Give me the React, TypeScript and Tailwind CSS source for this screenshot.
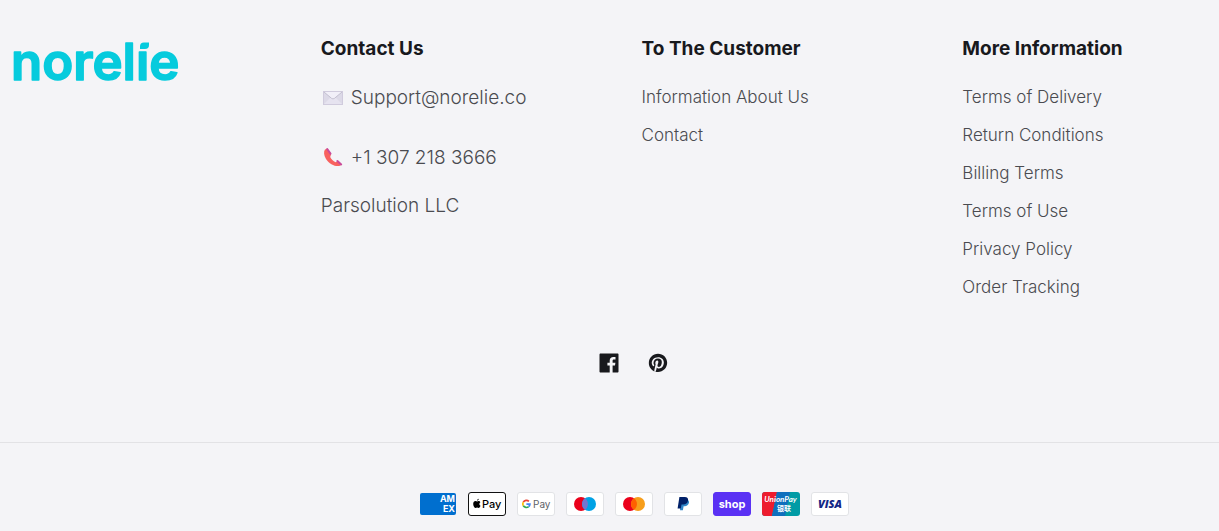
import type { ReactNode } from "react";

const customerLinks = ["Information About Us", "Contact"];

const informationLinks = [
  "Terms of Delivery",
  "Return Conditions",
  "Billing Terms",
  "Terms of Use",
  "Privacy Policy",
  "Order Tracking",
];

function Logo() {
  return (
    <svg width="192" height="64" viewBox="0 0 192 64" role="img" aria-label="norelie">
      <text
        x="11"
        y="49"
        fontFamily="Inter, sans-serif"
        fontSize="51"
        fontWeight="600"
        fill="#06cbdd"
        stroke="#06cbdd"
        strokeWidth="1.500"
        strokeLinejoin="round"
      >
        norelıe
      </text>
      {/* Leaf that stands in for the dot of the i */}
      <path d="M140 18v-2.500q0-4 4-4h5v2.500q0 4-4 4z" fill="#06cbdd" />
    </svg>
  );
}

function EnvelopeIcon() {
  return (
    <svg className="shrink-0" width="24" height="24" viewBox="0 0 24 24" aria-hidden="true">
      <rect x="2.5" y="5.5" width="19" height="13" fill="#dcd9e7" stroke="#d0cbdd" />
      <path d="M3 18 9.5 11.5h5L21 18z" fill="#e6e3f0" />
      <path d="M3 6h18l-7.6 6.4q-1.4 1-2.8 0z" fill="#f1eff8" />
      <path d="m3 6 7.6 6.4q1.4 1 2.8 0L21 6" fill="none" stroke="#b9b5c6" strokeWidth=".8" />
    </svg>
  );
}

function PhoneIcon() {
  return (
    <svg className="shrink-0" width="24" height="24" viewBox="0 0 24 24" aria-hidden="true">
      <path
        d="M4 3.500C2.500 5.500 2.800 9.500 5 12.900c2.800 4.300 8 7.300 12 7.200 1.800 0 3.100-.6 3.800-1.500l-4-3.600-2.300 1.300c-2-.8-4.600-3.100-5.300-5.200l.9-2.800L6.500 2.500z"
        fill="#f8615f"
      />
      <path d="m6.200 3 3.300 4.600M16.400 15l3.800 3.400" stroke="#c94a9b" strokeWidth="2" strokeLinecap="round" />
    </svg>
  );
}

function FacebookIcon() {
  return (
    <svg width="20" height="20" viewBox="0 0 20 20" aria-hidden="true">
      <path
        fill="#18191d"
        d="M18.500.5h-17C1 .5.5 1 .5 1.500v17c0 .6.500 1 1 1h9.200v-7H8.400V9.700h2.300v-2c0-2.400 1.500-3.700 3.600-3.700l2.200.1v2.500H15c-1.200 0-1.400.6-1.400 1.400v1.700h2.800l-.4 2.800h-2.400v7h4.900c.6 0 1-.4 1-1v-17c0-.6-.4-1-1-1z"
      />
    </svg>
  );
}

function PinterestIcon() {
  return (
    <svg width="20" height="20" viewBox="0 0 24 24" aria-hidden="true">
      <path
        fill="#18191d"
        d="M12 1C5.900 1 1 5.900 1 12c0 4.500 2.700 8.400 6.600 10.100 0-.8 0-1.700.2-2.500l1.400-6s-.4-.7-.4-1.700c0-1.600.9-2.800 2.100-2.800 1 0 1.500.7 1.500 1.600 0 1-.6 2.500-1 3.900-.3 1.200.6 2.100 1.700 2.100 2.100 0 3.500-2.700 3.500-5.800 0-2.400-1.600-4.200-4.600-4.200-3.300 0-5.400 2.500-5.400 5.200 0 1 .3 1.600.7 2.200.2.200.2.300.2.600l-.3.900c0 .3-.3.400-.5.300-1.500-.6-2.200-2.300-2.200-4.100 0-3.100 2.600-6.800 7.700-6.800 4.100 0 6.800 3 6.800 6.200 0 4.200-2.300 7.400-5.800 7.400-1.200 0-2.200-.6-2.600-1.300 0 0-.6 2.500-.7 2.900-.2.800-.6 1.500-1 2.200 1 .3 2.100.4 3.100.4 6.100 0 11-4.900 11-11S18.100 1 12 1z"
      />
    </svg>
  );
}

function Card({ label, fill = "#fff", border = "#e2e3e6", children }: {
  label: string;
  fill?: string;
  border?: string;
  children: ReactNode;
}) {
  return (
    <li>
      <svg width="38" height="24" viewBox="0 0 38 24" role="img" aria-label={label}>
        <rect x=".5" y=".5" width="37" height="23" rx="2.500" fill={fill} stroke={border} />
        {children}
      </svg>
    </li>
  );
}

function PaymentCards() {
  return (
    <ul className="flex flex-wrap justify-center gap-[11px]">
      <li>
        <svg width="38" height="24" viewBox="0 0 38 24" role="img" aria-label="American Express">
          <rect x="1" y="1" width="36" height="22" rx="2" fill="#006fcf" />
          <g fontFamily="Inter, sans-serif" fontSize="9" fontWeight="700" fill="#fff" textAnchor="end">
            <text x="36" y="10">AM</text>
            <text x="36" y="20">EX</text>
          </g>
        </svg>
      </li>
      <Card label="Apple Pay" border="#111">
        <path d="M10.600 9c-.6 0-1.100.4-1.500.4s-.9-.4-1.500-.4c-1.500 0-2.400 1.200-2.400 2.900 0 1.900 1.300 4 2.400 4 .6 0 .8-.4 1.500-.4s.9.4 1.500.4c.9 0 1.600-1.200 1.900-2.200-1.500-.7-1.500-2.700-.1-3.500-.4-.7-1.100-1.200-1.800-1.200zM10.700 6.700c-1 .1-1.700 1-1.600 1.900 1 0 1.700-.9 1.600-1.900z" fill="#000" />
        <text x="14" y="15.500" fontFamily="Inter, sans-serif" fontSize="11" fontWeight="500" fill="#000">Pay</text>
      </Card>
      <Card label="Google Pay">
        <g fill="none" strokeWidth="1.700">
          <path d="M11.900 9.300A3.600 3.600 0 0 0 6.300 10.100" stroke="#ea4335" />
          <path d="M6.300 10.100a3.600 3.600 0 0 0 0 3.700" stroke="#fbbc04" />
          <path d="M6.300 13.800a3.600 3.600 0 0 0 5.400.8" stroke="#34a853" />
          <path d="M11.700 14.600a3.600 3.600 0 0 0 1.200-2.500H9.400" stroke="#4285f4" />
        </g>
        <text x="16" y="15.500" fontFamily="Inter, sans-serif" fontSize="10" fontWeight="400" fill="#5f6368">Pay</text>
      </Card>
      <Card label="Maestro">
        <circle cx="15" cy="12" r="7" fill="#eb001b" />
        <circle cx="23" cy="12" r="7" fill="#00a2e5" />
        <path d="M19 6.300a7 7 0 0 1 0 11.400 7 7 0 0 1 0-11.400z" fill="#7375cf" />
      </Card>
      <Card label="Mastercard">
        <circle cx="15" cy="12" r="7" fill="#eb001b" />
        <circle cx="23" cy="12" r="7" fill="#f79e1b" />
        <path d="M19 6.300a7 7 0 0 1 0 11.400 7 7 0 0 1 0-11.400z" fill="#ff5f00" />
      </Card>
      <Card label="PayPal">
        <path d="M17 7.500h5.900c1.800.6 2.400 1.900 2 3.600-.5 2.100-2.100 3.100-4.200 3.100h-1.100l-.7 4h-2.900z" fill="#3086c8" />
        <path d="M15.400 5h5.300c2.700 0 3.800 1.500 3.300 3.800-.5 2.500-2.400 3.700-4.800 3.700h-1.700l-.7 4h-3.200z" fill="#012169" />
      </Card>
      <Card label="Shop Pay" fill="#5a31f4" border="#5a31f4">
        <text x="19" y="15.500" textAnchor="middle" fontFamily="Inter, sans-serif" fontSize="11" fontWeight="700" fill="#fff">shop</text>
      </Card>
      <li>
        <svg width="38" height="24" viewBox="0 0 38 24" role="img" aria-label="UnionPay">
          <rect width="38" height="24" rx="3" fill="#009ba5" />
          <path d="M3 0h12L10 24H3a3 3 0 0 1-3-3V3a3 3 0 0 1 3-3z" fill="#ed1c2e" />
          <path d="M15 0h13l-5 24H10z" fill="#0f6fbd" />
          <text x="18.500" y="10" textAnchor="middle" fontFamily="Lato, sans-serif" fontSize="8" fontWeight="700" fontStyle="italic" fill="#fff">UnionPay</text>
          <text x="22" y="19" textAnchor="middle" fontFamily="'Noto Sans CJK SC', sans-serif" fontSize="7" fontWeight="700" fill="#fff">银联</text>
        </svg>
      </li>
      <Card label="Visa">
        <text x="19" y="16" textAnchor="middle" fontFamily="'Open Sans', sans-serif" fontSize="11" fontWeight="800" fontStyle="italic" fill="#142787">VISA</text>
      </Card>
    </ul>
  );
}

function LinkColumn({ title, links }: { title: string; links: string[] }) {
  return (
    <nav aria-label={title}>
      <h2 className="text-[19px] leading-7 font-bold text-[#18191d]">{title}</h2>
      <ul className="mt-[15px] text-[17px] leading-[38px]">
        {links.map((link) => (
          <li key={link}>
            <a href="#" className="hover:underline">{link}</a>
          </li>
        ))}
      </ul>
    </nav>
  );
}

export default function App() {
  return (
    <footer className="min-h-screen bg-[#f4f4f7] pt-[35px] pb-4 font-['Inter',sans-serif] font-light text-[#4a4b50]">
      <div className="grid grid-cols-[5fr_5fr_5fr_4fr]">
        <a href="#" className="-mt-1 justify-self-start">
          <Logo />
        </a>
        <section>
          <h2 className="text-[19px] leading-7 font-bold text-[#18191d]">Contact Us</h2>
          <div className="mt-5 text-[19px] leading-[30px]">
            <a href="mailto:Support@norelie.co" className="flex items-center gap-1.5">
              <EnvelopeIcon />
              Support@norelie.co
            </a>
            <a href="tel:+13072183666" className="mt-[30px] flex items-center gap-1.5">
              <PhoneIcon />
              +1 307 218 3666
            </a>
            <p className="mt-[18px]">Parsolution LLC</p>
          </div>
        </section>
        <LinkColumn title="To The Customer" links={customerLinks} />
        <LinkColumn title="More Information" links={informationLinks} />
      </div>
      <div className="mt-[35px] flex justify-center gap-[5px] pl-12">
        <a href="#" aria-label="Facebook" className="flex size-11 items-center justify-center">
          <FacebookIcon />
        </a>
        <a href="#" aria-label="Pinterest" className="flex size-11 items-center justify-center">
          <PinterestIcon />
        </a>
      </div>
      <div className="mt-[57px] border-t border-[#e2e2e5] pt-[49px] pl-12">
        <PaymentCards />
      </div>
    </footer>
  );
}
